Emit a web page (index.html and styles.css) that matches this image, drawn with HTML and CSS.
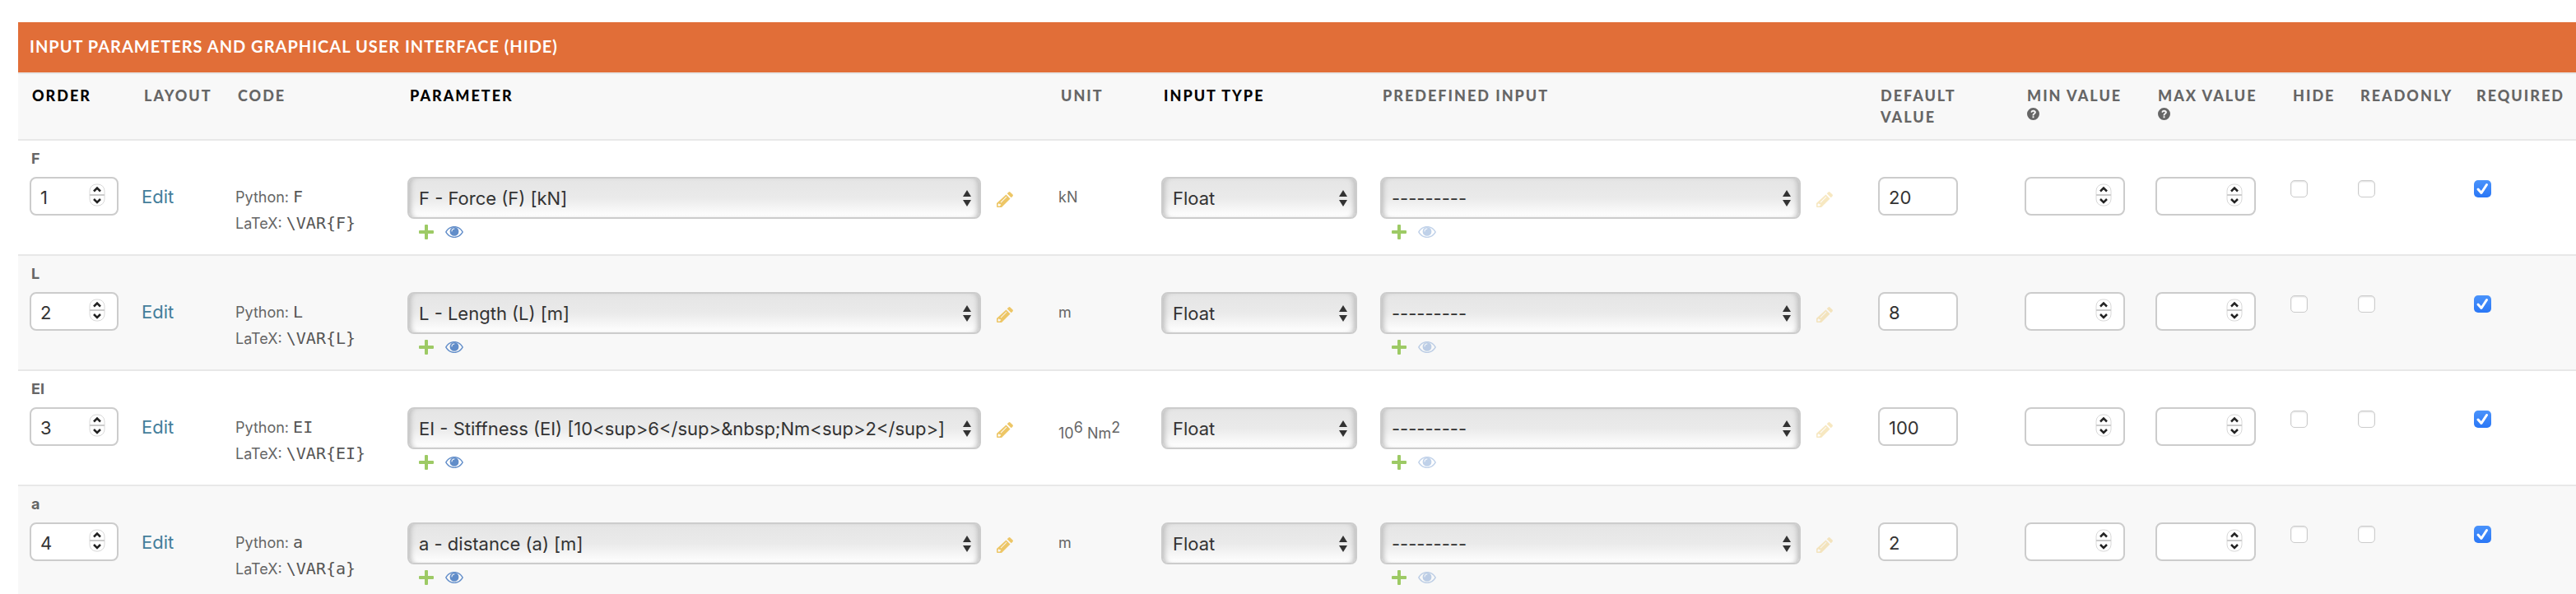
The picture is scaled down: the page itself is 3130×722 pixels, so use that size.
FILE: index.html
```html
<!DOCTYPE html>
<html lang="en">
<head>
    <meta charset="UTF-8">
    <title>Input parameters</title>
    <link rel="stylesheet" href="styles.css">
</head>
<body>
    <svg class="sprite" aria-hidden="true">
        <symbol id="icon-add" viewBox="0 0 18 18">
            <path d="M7 1q0-1 1-1h2q1 0 1 1v6h6q1 0 1 1v2q0 1-1 1h-6v6q0 1-1 1H8q-1 0-1-1v-6H1q-1 0-1-1V8q0-1 1-1h6z"/>
        </symbol>
        <symbol id="icon-view" viewBox="0 0 22 14">
            <path fill-rule="evenodd" d="M11 0c4.600 0 8.600 2.600 11 7-2.400 4.400-6.400 7-11 7S2.400 11.400 0 7C2.400 2.600 6.400 0 11 0zM11 1.300c-4 0-7.300 2.200-9.400 5.700 2.100 3.500 5.400 5.700 9.400 5.700s7.300-2.200 9.400-5.700c-2.100-3.500-5.400-5.700-9.400-5.700z"/>
            <path fill-rule="evenodd" d="M11 1a5.400 5.400 0 1 1 0 10.800A5.400 5.400 0 0 1 11 1zm0 1.400c-2 0-3.500 1.500-3.500 3.500 0 .7 1 .7 1 0 0-1.500 1-2.500 2.500-2.500.7 0 .7-1 0-1z"/>
        </symbol>
        <symbol id="icon-change" viewBox="0 0 20 20">
            <path fill-rule="evenodd" d="M11.500 3.500l5 5L6 19H1q-1 0-1-1v-4zM3 14l-1.500 1.500v2h2.200L5 16.200 4.500 15 3.200 15.200zM11.700 5.800l-7 7 .6.600 7-7z"/>
            <path d="M12.700 2.300L14.300.7q1.200-1.200 2.400 0l2.600 2.600q1.200 1.200 0 2.400l-1.600 1.600z"/>
        </symbol>
        <symbol id="icon-help" viewBox="0 0 16 16">
            <path fill-rule="evenodd" d="M8 0a8 8 0 1 1 0 16A8 8 0 0 1 8 0zM4.600 5.600l1.700.9C6.800 5.500 7.300 5 8 5c.8 0 1.300.4 1.300 1 0 1-2.300 1.200-2.300 3.300V10h2v-.5c0-1.100 2.600-1.500 2.600-3.700C11.600 4.200 10 3 8.100 3 6.400 3 5.300 3.900 4.600 5.600zM7 11v2h2v-2z"/>
        </symbol>
        <symbol id="icon-stepper" viewBox="0 0 20 28">
            <rect class="stepper-box" x="1" y="1" width="18" height="26" rx="8"/>
            <path class="stepper-line" d="M1 14h18"/>
            <path class="stepper-arrow" d="M6 9.500l4-4 4 4M6 19l4 4 4-4"/>
        </symbol>
    </svg>

    <div class="module">
        <h2>Input parameters and graphical user interface (<a href="#">Hide</a>)</h2>
        <table>
            <colgroup>
                <col class="col-order">
                <col class="col-layout">
                <col class="col-code">
                <col class="col-parameter">
                <col class="col-unit">
                <col class="col-type">
                <col class="col-predefined">
                <col class="col-default">
                <col class="col-min">
                <col class="col-max">
                <col class="col-hide">
                <col class="col-readonly">
                <col class="col-required">
            </colgroup>
            <thead>
                <tr>
                    <th class="required">Order</th>
                    <th>Layout</th>
                    <th>Code</th>
                    <th class="required">Parameter</th>
                    <th>Unit</th>
                    <th class="required">Input type</th>
                    <th>Predefined input</th>
                    <th>Default value</th>
                    <th>Min value <svg class="help"><use href="#icon-help"/></svg></th>
                    <th>Max value <svg class="help"><use href="#icon-help"/></svg></th>
                    <th>Hide</th>
                    <th>Readonly</th>
                    <th>Required</th>
                </tr>
            </thead>
            <tbody id="rows"></tbody>
        </table>
    </div>

    <script src="script.js"></script>
</body>
</html>
```
FILE: styles.css
```css
body {
    margin: 0;
    padding: 27px 0 0 22px;
    background: #fff;
    color: #666;
    font-family: Inter, "Liberation Sans", sans-serif;
    font-size: 18px;
}
.sprite {
    display: none;
}
svg {
    fill: currentColor;
}

/* module header */
.module h2 {
    margin: 0;
    padding: 15px 14px 17px;
    background: #e16e38;
    color: #fff;
    font-family: Lato, sans-serif;
    font-size: 20px;
    font-weight: 700;
    line-height: 29px;
    letter-spacing: 1px;
    text-transform: uppercase;
}
.module h2 a {
    color: inherit;
    text-decoration: none;
}

/* table */
table {
    width: 100%;
    table-layout: fixed;
    border-collapse: separate;
    border-spacing: 0;
}
.col-order { width: 136px; }
.col-layout { width: 114px; }
.col-code { width: 209px; }
.col-unit { width: 125px; }
.col-type { width: 266px; }
.col-predefined { width: 605px; }
.col-default { width: 178px; }
.col-min { width: 159px; }
.col-max { width: 164px; }
.col-hide { width: 82px; }
.col-readonly { width: 141px; }
.col-required { width: 138px; }
th, td {
    box-sizing: border-box;
    vertical-align: top;
}
th {
    height: 83px;
    padding: 13px 10px 0 17px;
    border-top: 2px solid #e8e8e8;
    border-bottom: 2px solid #e8e8e8;
    background: #f8f8f8;
    font-family: Lato, sans-serif;
    font-size: 18px;
    font-weight: 900;
    line-height: 26px;
    letter-spacing: 2px;
    text-align: left;
    text-transform: uppercase;
}
th.required {
    color: #000;
}
.help {
    display: block;
    width: 15px;
    height: 15px;
    margin-top: 2px;
}
td {
    padding: 0 14px;
}
.original td {
    height: 44px;
    padding: 10px 16px 0;
    font-weight: 700;
    line-height: 24px;
}
.fields td {
    height: 96px;
    border-bottom: 2px solid #e8e8e8;
}
.even td {
    background: #f8f8f8;
}

/* inputs */
input, select {
    box-sizing: border-box;
    margin: 0;
    border: 2px solid #ccc;
    border-radius: 8px;
    color: #333;
    font-family: inherit;
    font-size: 22px;
}
.text-input {
    width: 97px;
    height: 47px;
    padding: 3px 11px 0;
    background: #fff;
}
.number {
    display: grid;
    width: 122px;
    align-items: center;
}
.number.order {
    width: 108px;
}
.number .text-input, .number svg {
    grid-area: 1 / 1;
}
.number .text-input {
    width: 100%;
    appearance: textfield;
}
.number svg {
    width: 20px;
    height: 28px;
    margin: 0 16px 4px 0;
    justify-self: end;
    pointer-events: none;
}
.stepper-box {
    fill: #fff;
    stroke: #d8d8d8;
    stroke-width: 1;
}
.stepper-line {
    stroke: #ccc;
    stroke-width: 2;
}
.stepper-arrow {
    fill: none;
    stroke: #222;
    stroke-width: 2.5;
}
.picker {
    display: flex;
    align-items: center;
}
.select {
    display: grid;
    flex: 1;
    align-items: center;
}
.select select, .select .arrows {
    grid-area: 1 / 1;
}
.select select {
    width: 100%;
    height: 51px;
    padding: 0 12px;
    appearance: none;
    background: linear-gradient(#e5e5e5, #eaeaea 50%, #fff);
    box-shadow: inset 6px 0 6px -4px #bbb, inset -6px 0 6px -4px #bbb;
}
.arrows {
    width: 10px;
    height: 20px;
    margin-right: 12px;
    justify-self: end;
    color: #333;
    pointer-events: none;
}
.links {
    display: flex;
    align-items: center;
    gap: 14px;
    padding: 7px 14px;
}
.links a, .change {
    display: flex;
}
.add {
    width: 18px;
    height: 18px;
    color: #9dca65;
}
.view {
    width: 22px;
    height: 14px;
    color: #618dc9;
}
.change {
    margin: 4px 27px 0 19px;
    color: #edc666;
}
.change svg {
    width: 20px;
    height: 20px;
}
.disabled {
    opacity: 0.4;
}
.edit {
    color: #447e9b;
    font-size: 22px;
    line-height: 48px;
    text-decoration: none;
}
.fields .code {
    padding-top: 9px;
    line-height: 32px;
}
code {
    color: #555;
    font-family: "DejaVu Sans Mono", monospace;
    font-size: 20px;
    line-height: 20px;
}
.fields .unit {
    padding-top: 12px;
    line-height: 26px;
}
sup {
    font-size: 18px;
}

/* checkboxes */
input[type="checkbox"] {
    display: block;
    width: 21px;
    height: 21px;
    margin-top: 4px;
    appearance: none;
    border: 1px solid #ccc;
    border-radius: 5px;
    background: #fff;
    box-shadow: inset 0 1px 2px #ddd;
}
input[type="checkbox"]:checked {
    border: none;
    background: linear-gradient(#4a93fb, #2a77f6);
    box-shadow: none;
}
.check {
    display: grid;
    width: 21px;
}
.check input, .check svg {
    grid-area: 1 / 1;
}
.check svg {
    width: 21px;
    height: 21px;
    margin-top: 4px;
    fill: none;
    stroke: #fff;
    stroke-width: 3;
    stroke-linecap: round;
    stroke-linejoin: round;
    pointer-events: none;
}
```
FILE: script.js
```js
const parameters = [
    { name: 'F', label: 'F - Force (F) [kN]', unit: 'kN', value: '20' },
    { name: 'L', label: 'L - Length (L) [m]', unit: 'm', value: '8' },
    { name: 'EI', label: 'EI - Stiffness (EI) [10&lt;sup&gt;6&lt;/sup&gt;&amp;nbsp;Nm&lt;sup&gt;2&lt;/sup&gt;]', unit: '10<sup>6</sup> Nm<sup>2</sup>', value: '100' },
    { name: 'a', label: 'a - distance (a) [m]', unit: 'm', value: '2' }
];

function icon(name) {
    return `<svg><use href="#icon-${name}"/></svg>`;
}

function number(label, value, cls) {
    return `<div class="number ${cls}">
        <input class="text-input" type="number" aria-label="${label}" value="${value}">
        ${icon('stepper')}
    </div>`;
}

function select(label, text) {
    return `<div class="select">
        <select aria-label="${label}"><option>${text}</option></select>
        <svg class="arrows" viewBox="0 0 10 20"><path d="M5 0l5 8H0zM5 20l5-8H0z"/></svg>
    </div>`;
}

// select with the change, add and view links around it
function related(label, text, cls) {
    return `<div class="picker">
        ${select(label, text)}
        <a class="change ${cls}" href="#" aria-label="Change">${icon('change')}</a>
    </div>
    <div class="links">
        <a href="#" aria-label="Add"><svg class="add"><use href="#icon-add"/></svg></a>
        <a class="${cls}" href="#" aria-label="View"><svg class="view"><use href="#icon-view"/></svg></a>
    </div>`;
}

function checkbox(label, checked) {
    return `<div class="check">
        <input type="checkbox" aria-label="${label}" ${checked ? 'checked' : ''}>
        ${checked ? '<svg viewBox="0 0 21 21"><path d="M5 11l4 4.500L15.500 5.500"/></svg>' : ''}
    </div>`;
}

document.getElementById('rows').innerHTML = parameters.map((p, i) => {
    const parity = i % 2 ? 'even' : 'odd';
    return `<tr class="original ${parity}"><td colspan="13">${p.name}</td></tr>
    <tr class="fields ${parity}">
        <td>${number('Order', i + 1, 'order')}</td>
        <td><a class="edit" href="#">Edit</a></td>
        <td class="code">Python: <code>${p.name}</code><br>LaTeX: <code>\\VAR{${p.name}}</code></td>
        <td>${related('Parameter', p.label, '')}</td>
        <td class="unit">${p.unit}</td>
        <td>${select('Input type', 'Float')}</td>
        <td>${related('Predefined input', '---------', 'disabled')}</td>
        <td><input class="text-input" type="text" aria-label="Default value" value="${p.value}"></td>
        <td>${number('Min value', '', '')}</td>
        <td>${number('Max value', '', '')}</td>
        <td>${checkbox('Hide', false)}</td>
        <td>${checkbox('Readonly', false)}</td>
        <td>${checkbox('Required', true)}</td>
    </tr>`;
}).join('');
```
